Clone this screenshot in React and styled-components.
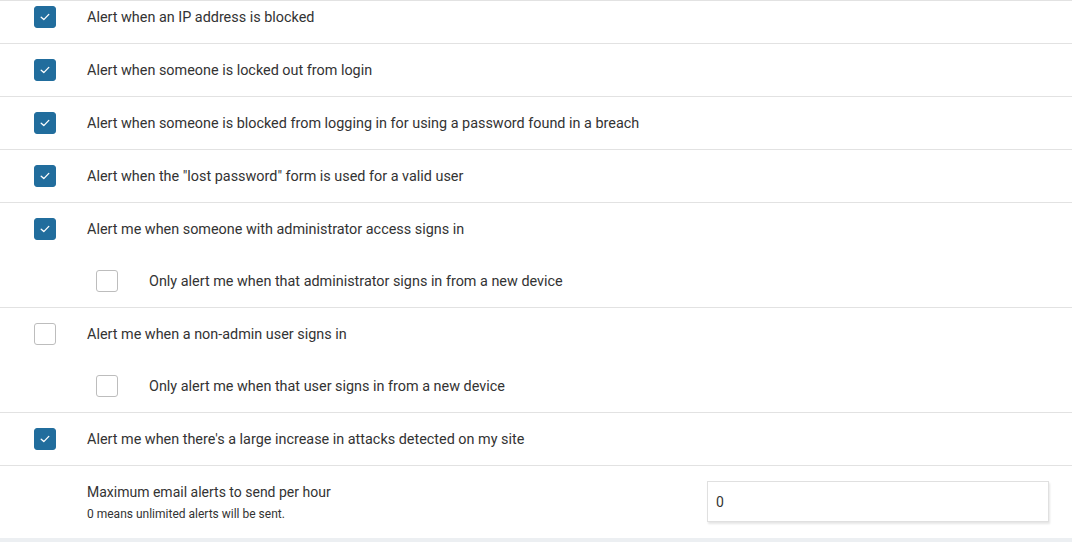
import React from "react";
import styled, { createGlobalStyle } from "styled-components";

const GlobalStyle = createGlobalStyle`
  html, body {
    margin: 0;
    padding: 0;
    background: #ffffff;
    font-family: Roboto, "Liberation Sans", sans-serif;
    color: #333333;
  }
`;

const alerts = [
  { label: "Alert when an IP address is blocked", checked: true },
  { label: "Alert when someone is locked out from login", checked: true },
  {
    label:
      "Alert when someone is blocked from logging in for using a password found in a breach",
    checked: true,
  },
  { label: 'Alert when the "lost password" form is used for a valid user', checked: true },
  {
    label: "Alert me when someone with administrator access signs in",
    checked: true,
    sub: { label: "Only alert me when that administrator signs in from a new device", checked: false },
  },
  {
    label: "Alert me when a non-admin user signs in",
    checked: false,
    sub: { label: "Only alert me when that user signs in from a new device", checked: false },
  },
  {
    label: "Alert me when there's a large increase in attacks detected on my site",
    checked: true,
  },
];

function CheckIcon() {
  return (
    <svg width="10" height="8" viewBox="0 0 10 8" fill="none">
      <path
        d="M1.2 4.2 L3.8 6.6 L8.8 1.4"
        stroke="#ffffff"
        strokeWidth="1.3"
        strokeLinecap="round"
        strokeLinejoin="round"
      />
    </svg>
  );
}

function Checkbox({ checked }) {
  return <Box $checked={checked}>{checked && <CheckIcon />}</Box>;
}

export default function App() {
  return (
    <Page>
      <GlobalStyle />
      <List>
        {alerts.map((a, i) => (
          <Group key={i}>
            <Row $first={i === 0}>
              <Checkbox checked={a.checked} />
              <Label>{a.label}</Label>
            </Row>
            {a.sub && (
              <Row $sub>
                <Checkbox checked={a.sub.checked} />
                <Label>{a.sub.label}</Label>
              </Row>
            )}
          </Group>
        ))}
        <SettingRow>
          <SettingText>
            <SettingTitle>Maximum email alerts to send per hour</SettingTitle>
            <SettingHint>0 means unlimited alerts will be sent.</SettingHint>
          </SettingText>
          <NumberInput type="text" defaultValue="0" />
        </SettingRow>
      </List>
      <Footer />
    </Page>
  );
}

const Page = styled.div`
  width: 1072px;
  min-height: 542px;
  background: #ffffff;
`;

const List = styled.div`
  border-top: 1px solid #e2e2e2;
`;

const Group = styled.div`
  border-bottom: 1px solid #e2e2e2;
`;

const Row = styled.div`
  display: flex;
  align-items: center;
  height: 22px;
  padding: ${(p) => (p.$first ? "5px 0 15px" : "15px 0")};
  padding-left: ${(p) => (p.$sub ? "96px" : "34px")};
  gap: 31px;
`;

const Box = styled.span`
  box-sizing: border-box;
  flex: none;
  width: 22px;
  height: 22px;
  border-radius: 3px;
  display: flex;
  align-items: center;
  justify-content: center;
  background: ${(p) => (p.$checked ? "#216d9d" : "#ffffff")};
  border: 1px solid ${(p) => (p.$checked ? "#216d9d" : "#bdbdbd")};
`;

const Label = styled.span`
  font-size: 14.4px;
  line-height: 20px;
  padding-top: 2px;
  color: #333333;
`;

const SettingRow = styled.div`
  display: flex;
  align-items: center;
  justify-content: space-between;
  height: 72px;
  padding: 0 23px 0 87px;
`;

const SettingText = styled.div`
  display: flex;
  flex-direction: column;
  gap: 4px;
  margin-top: 2px;
`;

const SettingTitle = styled.span`
  font-size: 14px;
  line-height: 18px;
  color: #333333;
`;

const SettingHint = styled.span`
  font-size: 12px;
  line-height: 18px;
  color: #333333;
`;

const NumberInput = styled.input`
  box-sizing: border-box;
  width: 342px;
  height: 41px;
  margin-top: -1px;
  padding: 0 8px;
  border: 1px solid #e0e0e0;
  border-radius: 0;
  box-shadow: 1px 2px 2px rgba(0, 0, 0, 0.1);
  font-family: Roboto, "Liberation Sans", sans-serif;
  font-size: 14px;
  color: #333333;
  outline: none;
  background: #ffffff;
`;

const Footer = styled.div`
  height: 5px;
  background: #eceff2;
`;
